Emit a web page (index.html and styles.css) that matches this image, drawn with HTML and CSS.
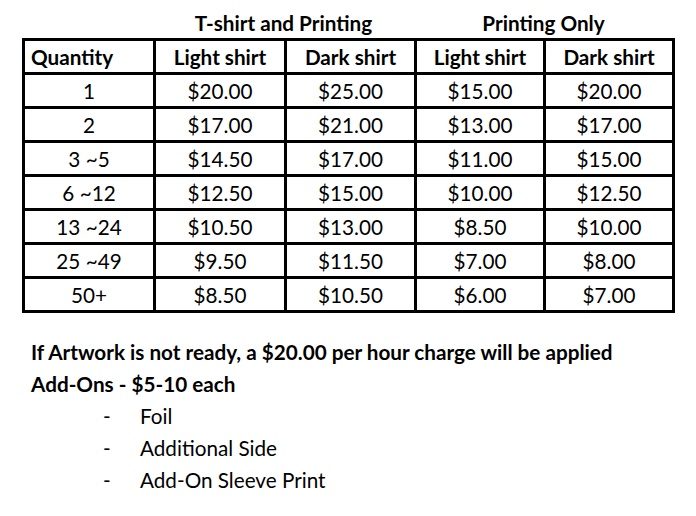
FILE: index.html
```html
<!DOCTYPE html>
<html>
<head>
<meta charset="utf-8">
<link rel="stylesheet" href="styles.css">
</head>
<body>
<div class="page">
  <div class="groups">
    <div class="spacer"></div>
    <div class="group">T-shirt and Printing</div>
    <div class="group">Printing Only</div>
  </div>
  <table class="prices">
    <colgroup>
      <col class="c1"><col class="c2"><col class="c3"><col class="c4"><col class="c5">
    </colgroup>
    <tr class="head"><th class="qty">Quantity</th><th>Light shirt</th><th>Dark shirt</th><th>Light shirt</th><th>Dark shirt</th></tr>
    <tr><td>1</td><td>$20.00</td><td>$25.00</td><td>$15.00</td><td>$20.00</td></tr>
    <tr><td>2</td><td>$17.00</td><td>$21.00</td><td>$13.00</td><td>$17.00</td></tr>
    <tr><td>3 ~5</td><td>$14.50</td><td>$17.00</td><td>$11.00</td><td>$15.00</td></tr>
    <tr><td>6 ~12</td><td>$12.50</td><td>$15.00</td><td>$10.00</td><td>$12.50</td></tr>
    <tr><td>13 ~24</td><td>$10.50</td><td>$13.00</td><td>$8.50</td><td>$10.00</td></tr>
    <tr><td>25 ~49</td><td>$9.50</td><td>$11.50</td><td>$7.00</td><td>$8.00</td></tr>
    <tr><td>50+</td><td>$8.50</td><td>$10.50</td><td>$6.00</td><td>$7.00</td></tr>
  </table>
  <div class="notes">
    <p class="bold">If Artwork is not ready, a $20.00 per hour charge will be applied</p>
    <p class="bold">Add-Ons - $5-10 each</p>
    <ul class="addons">
      <li><span class="dash">-</span><span>Foil</span></li>
      <li><span class="dash">-</span><span>Additional Side</span></li>
      <li><span class="dash">-</span><span>Add-On Sleeve Print</span></li>
    </ul>
  </div>
</div>
</body>
</html>
```
FILE: styles.css
```css
html, body {
  margin: 0;
  padding: 0;
  background: #fff;
}
.page {
  font-family: Lato, "Open Sans", sans-serif;
  color: #000;
  padding: 8px 0 0 22px;
  width: 652px;
}
.groups {
  display: grid;
  grid-template-columns: 131px 261px 259px;
  height: 30px;
  align-items: center;
}
.group {
  text-align: center;
  font-weight: bold;
  font-size: 20.7px;
}
.prices {
  border-collapse: collapse;
  table-layout: fixed;
  width: 652px;
  border: 3px solid #000;
  font-size: 20.7px;
}
.c1, .c2 { width: 131px; }
.c3 { width: 130px; }
.c4, .c5 { width: 129px; }
.prices tr { height: 34px; }
.prices td, .prices th {
  border: 3px solid #000;
  padding: 1px 4px 0;
  text-align: center;
  line-height: 1;
}
.prices th { font-weight: bold; }
.prices th.qty { text-align: left; padding-left: 6px; }
.notes {
  margin-top: 23px;
  padding-left: 9px;
  font-size: 20.7px;
}
.notes p {
  margin: 0;
  height: 32px;
  line-height: 32px;
}
.bold { font-weight: bold; }
.addons {
  list-style: none;
  margin: 0;
  padding: 0;
}
.addons li {
  display: flex;
  height: 32px;
  line-height: 32px;
}
.dash {
  width: 109px;
  padding-left: 72px;
  box-sizing: border-box;
}
```
